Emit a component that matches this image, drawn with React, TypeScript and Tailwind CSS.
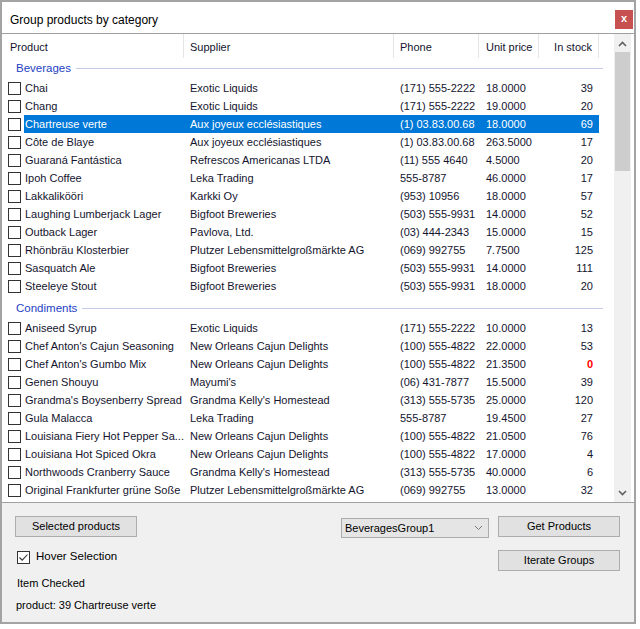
import React from 'react';

type Product = {
  name: string;
  supplier: string;
  phone: string;
  price: string;
  stock: number;
  selected?: boolean;
};

type Group = { title: string; items: Product[] };

const groups: Group[] = [
  {
    title: 'Beverages',
    items: [
      { name: 'Chai', supplier: 'Exotic Liquids', phone: '(171) 555-2222', price: '18.0000', stock: 39 },
      { name: 'Chang', supplier: 'Exotic Liquids', phone: '(171) 555-2222', price: '19.0000', stock: 20 },
      { name: 'Chartreuse verte', supplier: 'Aux joyeux ecclésiastiques', phone: '(1) 03.83.00.68', price: '18.0000', stock: 69, selected: true },
      { name: 'Côte de Blaye', supplier: 'Aux joyeux ecclésiastiques', phone: '(1) 03.83.00.68', price: '263.5000', stock: 17 },
      { name: 'Guaraná Fantástica', supplier: 'Refrescos Americanas LTDA', phone: '(11) 555 4640', price: '4.5000', stock: 20 },
      { name: 'Ipoh Coffee', supplier: 'Leka Trading', phone: '555-8787', price: '46.0000', stock: 17 },
      { name: 'Lakkalikööri', supplier: 'Karkki Oy', phone: '(953) 10956', price: '18.0000', stock: 57 },
      { name: 'Laughing Lumberjack Lager', supplier: 'Bigfoot Breweries', phone: '(503) 555-9931', price: '14.0000', stock: 52 },
      { name: 'Outback Lager', supplier: 'Pavlova, Ltd.', phone: '(03) 444-2343', price: '15.0000', stock: 15 },
      { name: 'Rhönbräu Klosterbier', supplier: 'Plutzer Lebensmittelgroßmärkte AG', phone: '(069) 992755', price: '7.7500', stock: 125 },
      { name: 'Sasquatch Ale', supplier: 'Bigfoot Breweries', phone: '(503) 555-9931', price: '14.0000', stock: 111 },
      { name: 'Steeleye Stout', supplier: 'Bigfoot Breweries', phone: '(503) 555-9931', price: '18.0000', stock: 20 },
    ],
  },
  {
    title: 'Condiments',
    items: [
      { name: 'Aniseed Syrup', supplier: 'Exotic Liquids', phone: '(171) 555-2222', price: '10.0000', stock: 13 },
      { name: "Chef Anton's Cajun Seasoning", supplier: 'New Orleans Cajun Delights', phone: '(100) 555-4822', price: '22.0000', stock: 53 },
      { name: "Chef Anton's Gumbo Mix", supplier: 'New Orleans Cajun Delights', phone: '(100) 555-4822', price: '21.3500', stock: 0 },
      { name: 'Genen Shouyu', supplier: "Mayumi's", phone: '(06) 431-7877', price: '15.5000', stock: 39 },
      { name: "Grandma's Boysenberry Spread", supplier: "Grandma Kelly's Homestead", phone: '(313) 555-5735', price: '25.0000', stock: 120 },
      { name: 'Gula Malacca', supplier: 'Leka Trading', phone: '555-8787', price: '19.4500', stock: 27 },
      { name: 'Louisiana Fiery Hot Pepper Sa...', supplier: 'New Orleans Cajun Delights', phone: '(100) 555-4822', price: '21.0500', stock: 76 },
      { name: 'Louisiana Hot Spiced Okra', supplier: 'New Orleans Cajun Delights', phone: '(100) 555-4822', price: '17.0000', stock: 4 },
      { name: 'Northwoods Cranberry Sauce', supplier: "Grandma Kelly's Homestead", phone: '(313) 555-5735', price: '40.0000', stock: 6 },
      { name: 'Original Frankfurter grüne Soße', supplier: 'Plutzer Lebensmittelgroßmärkte AG', phone: '(069) 992755', price: '13.0000', stock: 32 },
    ],
  },
];

const Chevron = ({ up }: { up?: boolean }) => (
  <svg width="9" height="6" viewBox="0 0 9 6" className={up ? '' : 'rotate-180'}>
    <path d="M1 5 L4.5 1.5 L8 5" fill="none" stroke="#606060" strokeWidth="1.6" />
  </svg>
);

const Row = ({ p }: { p: Product }) => (
  <div className="flex h-[18px] items-center">
    <div className="w-[22px] flex items-center">
      <div className="ml-[6px] w-[13px] h-[13px] border border-[#333] bg-white" />
    </div>
    <div className={`flex h-full w-[575px] items-center whitespace-nowrap ${p.selected ? 'bg-[#0078d7] text-white' : ''}`}>
      <div className="w-[160px] pl-[1px] overflow-hidden">{p.name}</div>
      <div className="w-[210px] pl-[6px] overflow-hidden">{p.supplier}</div>
      <div className="w-[85px] pl-[6px] overflow-hidden">{p.phone}</div>
      <div className="w-[60px] pl-[7px]">{p.price}</div>
      <div className={`w-[60px] pr-[6px] text-right ${p.stock === 0 ? 'text-[#ff0000] font-bold' : ''}`}>{p.stock}</div>
    </div>
  </div>
);

const Button = ({ label }: { label: string }) => (
  <div className="w-[122px] h-[21px] bg-[#e1e1e1] border border-[#adadad] flex items-center justify-center text-black">
    {label}
  </div>
);

export default function App() {
  return (
    <div className="w-[640px] h-[629px] bg-white font-['Liberation_Sans',sans-serif] text-[11px] text-[#14142e]">
      <div className="w-[636px] h-[624px] border-2 border-[#a3a3a3] flex flex-col">
        {/* title bar */}
        <div className="h-[32px] bg-white flex justify-between border-b border-[#a0a0a0] shrink-0">
          <span className="pl-[8px] pt-[9px] text-[12px] text-black">Group products by category</span>
          <div className="mr-[1px] mt-[8px] w-[18px] h-[19px] bg-[#c75050] flex items-center justify-center text-white text-[11px] font-bold leading-none pb-[2px]">
            x
          </div>
        </div>

        {/* list view */}
        <div className="h-[469px] flex bg-white border-b border-[#a0a0a0] shrink-0">
          <div className="w-[612px] overflow-hidden">
            <div className="flex h-[24px] items-center whitespace-nowrap">
              <div className="w-[182px] h-full pl-[8px] pt-[2px] flex items-center border-r border-[#e5e5e5]">Product</div>
              <div className="w-[210px] h-full pl-[6px] pt-[2px] flex items-center border-r border-[#e5e5e5]">Supplier</div>
              <div className="w-[85px] h-full pl-[6px] pt-[2px] flex items-center border-r border-[#e5e5e5]">Phone</div>
              <div className="w-[60px] h-full pl-[7px] pt-[2px] flex items-center border-r border-[#e5e5e5]">Unit price</div>
              <div className="w-[60px] h-full pr-[6px] pt-[2px] flex items-center justify-end border-r border-[#e5e5e5]">In stock</div>
            </div>
            {groups.map((g, i) => (
              <div key={g.title}>
                <div className={`flex h-[21px] items-center pl-[14px] pr-[11px] ${i > 0 ? 'mt-[3px]' : ''}`}>
                  <span className="text-[11.5px] text-[#1e3fc4]">{g.title}</span>
                  <div className="flex-1 h-px bg-[#c3cdea] ml-[5px]" />
                </div>
                {g.items.map((p) => (
                  <Row key={p.name} p={p} />
                ))}
              </div>
            ))}
          </div>
          {/* scrollbar */}
          <div className="w-[17px] bg-[#f0f0f0] flex flex-col">
            <div className="h-[17px] flex items-center justify-center mt-[1px]">
              <Chevron up />
            </div>
            <div className="h-[119px] bg-[#cdcdcd] mx-[1px]" />
            <div className="flex-1" />
            <div className="h-[17px] flex items-center justify-center mb-[1px]">
              <Chevron />
            </div>
          </div>
        </div>

        {/* bottom panel */}
        <div className="flex-1 bg-[#f0f0f0] flex pt-[13px]">
          <div className="w-[339px] pl-[13px] flex flex-col">
            <Button label="Selected products" />
            <div className="mt-[13px] ml-[2px] flex items-center h-[14px]">
              <div className="w-[13px] h-[13px] border border-[#333] bg-white flex items-center justify-center">
                <svg width="11" height="11" viewBox="0 0 11 11">
                  <path d="M1.5 5.5 L4.2 8.2 L9.5 2.5" fill="none" stroke="#333" strokeWidth="1.1" />
                </svg>
              </div>
              <span className="ml-[6px] text-[11.5px] text-black">Hover Selection</span>
            </div>
            <div className="mt-[11px] ml-[2px] h-[16px] leading-[16px] text-black">Item Checked</div>
            <div className="mt-[6px] ml-[1px] h-[16px] leading-[16px] text-black">product: 39 Chartreuse verte</div>
          </div>
          <div className="w-[148px] h-[20px] mt-[2px] bg-[#e5e5e5] border border-[#acacac] flex items-center justify-between pl-[3px] pr-[5px] text-black">
            <span>BeveragesGroup1</span>
            <svg width="9" height="6" viewBox="0 0 9 6">
              <path d="M1 1 L4.5 4.5 L8 1" fill="none" stroke="#7a7a7a" strokeWidth="1" />
            </svg>
          </div>
          <div className="ml-[9px] flex flex-col gap-[13px]">
            <Button label="Get Products" />
            <Button label="Iterate Groups" />
          </div>
        </div>
      </div>
    </div>
  );
}
